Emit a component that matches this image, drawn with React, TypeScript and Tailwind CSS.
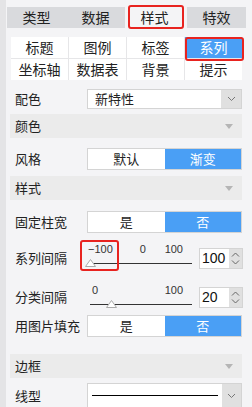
import React from 'react';

const font = { fontFamily: '"Noto Sans CJK SC", "Noto Sans", sans-serif' };

const Chevron = () => (
  <svg width="9" height="6" viewBox="0 0 9 6">
    <path d="M1 1 L4.5 4.5 L8 1" fill="none" stroke="#777" strokeWidth="1" />
  </svg>
);

const SectionHeader = ({ title, className }: { title: string; className?: string }) => (
  <div className={`flex h-[24px] w-[232px] items-center justify-between bg-[#ebebeb] pl-[5px] pr-[9px] text-[13px] text-[#222] ${className || ''}`}>
    <span>{title}</span>
    <svg width="8" height="5" viewBox="0 0 8 5">
      <path d="M0 0 L8 0 L4 5 Z" fill="#b5b5b5" />
    </svg>
  </div>
);

const Toggle = ({ left, right }: { left: string; right: string }) => (
  <div className="flex h-[22px] w-[155px] border border-[#d4d4d4] text-[13px]">
    <div className="flex flex-1 items-center justify-center bg-white text-[#222]">{left}</div>
    <div className="flex flex-1 items-center justify-center bg-[#4a9ff5] text-white">{right}</div>
  </div>
);

const Row = ({ label, children, className }: { label: string; children: React.ReactNode; className?: string }) => (
  <div className={`flex w-[232px] items-center ${className || ''}`}>
    <div className="w-[77px] pl-[5px] text-[13px] text-[#222]">{label}</div>
    {children}
  </div>
);

const Thumb = () => (
  <svg width="11" height="8" viewBox="0 0 11 8">
    <path d="M5.5 0.5 L10.5 7.5 L0.5 7.5 Z" fill="#fff" stroke="#aaa" strokeWidth="1" />
  </svg>
);

const NumberBox = ({ value }: { value: string }) => (
  <div className="flex h-[21px] border border-[#d4d4d4]">
    <div className="flex w-[29px] items-center bg-white pl-[2px] text-[14px] text-[#111]" style={{ fontFamily: '"Liberation Sans", sans-serif' }}>
      {value}
    </div>
    <div className="flex w-[13px] flex-col items-center justify-center gap-[3px] bg-[#e0e0e0]">
      <svg width="9" height="5" viewBox="0 0 9 5">
        <path d="M1 4.5 L4.5 1 L8 4.5" fill="none" stroke="#666" strokeWidth="1" />
      </svg>
      <svg width="9" height="5" viewBox="0 0 9 5">
        <path d="M1 0.5 L4.5 4 L8 0.5" fill="none" stroke="#666" strokeWidth="1" />
      </svg>
    </div>
  </div>
);

export default function App() {
  const tabs = ['类型', '数据', '样式', '特效'];
  const subTabs = ['标题', '图例', '标签', '系列', '坐标轴', '数据表', '背景', '提示'];

  return (
    <div className="relative flex h-[407px] w-[252px] overflow-hidden bg-[#f4f4f6]" style={font}>
      <div className="w-[6px] shrink-0 bg-[#e4e4e6]" />
      <div className="flex flex-col">
        {/* top tabs */}
        <div className="mt-[7px] ml-[1px] flex h-[25px] w-[239px] text-[14px] text-[#222]">
          {tabs.map((t, i) => (
            <div
              key={t}
              className={`flex flex-1 items-center justify-center ${i === 2 ? 'bg-[#f4f4f6]' : 'bg-[#d9dadd]'} ${i === 3 ? 'ml-[3px]' : ''}`}
            >
              {t}
            </div>
          ))}
        </div>

        {/* sub tabs */}
        <div className="mt-[9px] ml-[5px] grid w-[231px] grid-cols-4 gap-[1px] bg-[#e6e6e8] text-[14px]">
          {subTabs.map((t, i) => (
            <div
              key={t}
              className={`flex h-[21px] items-center justify-center ${i === 3 ? 'bg-[#4a9ff5] text-white' : 'bg-white text-[#222]'}`}
            >
              {t}
            </div>
          ))}
        </div>

        <div className="ml-[4px] flex flex-col">
          <Row label="配色" className="mt-[9px]">
            <div className="flex h-[20px] w-[155px] border border-[#d4d4d4]">
              <div className="flex flex-1 items-center bg-white pl-[7px] text-[13px] text-[#222]">新特性</div>
              <div className="flex w-[20px] items-center justify-center bg-[#e0e0e0]">
                <Chevron />
              </div>
            </div>
          </Row>

          <SectionHeader title="颜色" className="mt-[5px]" />

          <Row label="风格" className="mt-[10px]">
            <Toggle left="默认" right="渐变" />
          </Row>

          <SectionHeader title="样式" className="mt-[6px]" />

          <Row label="固定柱宽" className="mt-[11px]">
            <Toggle left="是" right="否" />
          </Row>

          <Row label="系列间隔" className="mt-[10px]">
            <div className="flex w-[155px] items-center">
              <div className="relative ml-[3px] h-[30px] w-[102px]" style={{ fontFamily: '"Liberation Sans", sans-serif' }}>
                <div className="flex justify-between pr-[9px] text-[11px] leading-[13px] text-[#333]">
                  <span className="-ml-[2px]">−100</span>
                  <span className="ml-[8px]">0</span>
                  <span>100</span>
                </div>
                <div className="mt-[7px] h-[1px] w-[102px] bg-[#333]" />
                <div className="absolute left-[-5px] top-[16px]">
                  <Thumb />
                </div>
              </div>
              <div className="ml-[7px]">
                <NumberBox value="100" />
              </div>
            </div>
          </Row>

          <Row label="分类间隔" className="mt-[11px]">
            <div className="flex w-[155px] items-center">
              <div className="relative ml-[3px] h-[26px] w-[102px]" style={{ fontFamily: '"Liberation Sans", sans-serif' }}>
                <div className="flex justify-between pl-[2px] pr-[9px] text-[11px] leading-[13px] text-[#333]">
                  <span>0</span>
                  <span>100</span>
                </div>
                <div className="mt-[7px] h-[1px] w-[102px] bg-[#333]" />
                <div className="absolute left-[16px] top-[16px]">
                  <Thumb />
                </div>
              </div>
              <div className="ml-[7px]">
                <NumberBox value="20" />
              </div>
            </div>
          </Row>

          <Row label="用图片填充" className="mt-[5px]">
            <Toggle left="是" right="否" />
          </Row>

          <SectionHeader title="边框" className="mt-[17px]" />

          <Row label="线型" className="mt-[5px]">
            <div className="flex h-[25px] w-[155px] border border-[#d4d4d4]">
              <div className="flex flex-1 items-center bg-white px-[4px]">
                <div className="h-[1px] w-full bg-black" />
              </div>
              <div className="flex w-[19px] items-center justify-center bg-[#e0e0e0]">
                <Chevron />
              </div>
            </div>
          </Row>

          <Row label="" className="mt-[10px]">
            <div className="flex h-[25px] w-[155px] border border-[#d4d4d4]">
              <div className="flex-1 bg-white" />
              <div className="w-[19px] bg-[#e0e0e0]" />
            </div>
          </Row>
        </div>
      </div>

      {/* annotation boxes */}
      <div className="absolute left-[128px] top-[5px] h-[24px] w-[56px] rounded-[3px] border-2 border-[#e8231f]" />
      <div className="absolute left-[185px] top-[37px] h-[24px] w-[59px] rounded-[3px] border-2 border-[#e8231f]" />
      <div className="absolute left-[80px] top-[240px] h-[31px] w-[39px] rounded-[3px] border-2 border-[#e8231f]" />
    </div>
  );
}
